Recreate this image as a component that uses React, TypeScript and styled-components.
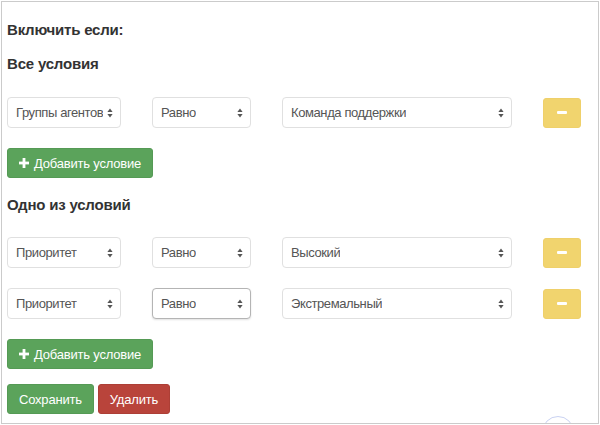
import React from 'react';
import styled, { createGlobalStyle } from 'styled-components';

const Global = createGlobalStyle`
  html, body { margin: 0; padding: 0; background: #fff; }
  body { font-family: "Liberation Sans", Arial, "Helvetica Neue", sans-serif; }
`;

const Frame = styled.div`
  position: relative;
  box-sizing: border-box;
  margin: 1px 0 0 1px;
  width: 598px;
  height: 423px;
  border: 1px solid #cbcbcb;
  padding: 18px 0 0 5px;
  overflow: hidden;
  background: #fff;
`;

const Heading = styled.h3<{ $mt: number }>`
  margin: ${(p) => p.$mt}px 0 0 0;
  font-size: 15px;
  line-height: 20px;
  font-weight: bold;
  letter-spacing: -0.2px;
  color: #333;
`;

const Row = styled.div<{ $mt: number }>`
  margin-top: ${(p) => p.$mt}px;
  display: grid;
  grid-template-columns: 114px 99px 230px 38px;
  column-gap: 31px;
  align-items: center;
`;

const SelectBox = styled.div<{ $focused?: boolean }>`
  box-sizing: border-box;
  height: 31px;
  display: flex;
  align-items: center;
  justify-content: space-between;
  gap: 2px;
  padding: 0 7px 0 8px;
  background: #fff;
  border: 1px solid ${(p) => (p.$focused ? '#b4b4b4' : '#e0e0e0')};
  border-radius: 4px;
  box-shadow: ${(p) => (p.$focused ? '0 1px 2px rgba(0,0,0,0.12)' : 'none')};
  font-size: 13px;
  letter-spacing: -0.4px;
  color: #555;
  white-space: nowrap;
  overflow: hidden;
  & > span { overflow: hidden; }
  & > svg { flex: none; }
`;

const MinusButton = styled.button`
  box-sizing: border-box;
  height: 30px;
  width: 38px;
  display: flex;
  align-items: center;
  justify-content: center;
  padding: 0;
  background: #f1d46e;
  border: 1px solid #efd06a;
  border-radius: 3px;
  &::after {
    content: '';
    display: block;
    width: 10px;
    height: 3px;
    border-radius: 1px;
    background: #fff;
  }
`;

const Button = styled.button<{ $variant: 'green' | 'red' }>`
  box-sizing: border-box;
  height: 30px;
  padding: 0 11px;
  display: inline-flex;
  align-items: center;
  gap: 5px;
  font-family: inherit;
  font-size: 13px;
  letter-spacing: -0.2px;
  color: #fff;
  border-radius: 3px;
  border: 1px solid ${(p) => (p.$variant === 'green' ? '#559a55' : '#ad3f36')};
  background: ${(p) => (p.$variant === 'green' ? '#5ba35b' : '#b9443b')};
  cursor: pointer;
`;

const AddRow = styled.div<{ $mt: number }>`
  margin-top: ${(p) => p.$mt}px;
  display: flex;
`;

const Actions = styled.div`
  margin-top: 15px;
  display: flex;
  gap: 4px;
`;

const Arc = styled.div`
  position: absolute;
  left: 540px;
  top: 414px;
  width: 30px;
  height: 30px;
  border-radius: 50%;
  border: 1px solid #c9d2f2;
`;

const Arrows = () => (
  <svg width="6" height="10" viewBox="0 0 6 10" aria-hidden>
    <path d="M3 0.5 L5.6 4 H0.4 Z" fill="#555" />
    <path d="M3 9.5 L5.6 6 H0.4 Z" fill="#555" />
  </svg>
);

const Plus = () => (
  <svg width="10" height="10" viewBox="0 0 10 10" aria-hidden>
    <rect x="3.6" y="0" width="2.8" height="10" fill="#fff" />
    <rect x="0" y="3.6" width="10" height="2.8" fill="#fff" />
  </svg>
);

const Select = ({ label, focused }: { label: string; focused?: boolean }) => (
  <SelectBox $focused={focused}>
    <span>{label}</span>
    <Arrows />
  </SelectBox>
);

type Cond = { field: string; op: string; value: string; focusedOp?: boolean };

const CondRow = ({ c, mt }: { c: Cond; mt: number }) => (
  <Row $mt={mt}>
    <Select label={c.field} />
    <Select label={c.op} focused={c.focusedOp} />
    <Select label={c.value} />
    <MinusButton aria-label="Удалить условие" />
  </Row>
);

export default function App() {
  return (
    <>
      <Global />
      <Frame>
        <Heading $mt={0}>Включить если:</Heading>
        <Heading $mt={14}>Все условия</Heading>
        <CondRow mt={23} c={{ field: 'Группы агентов', op: 'Равно', value: 'Команда поддержки' }} />
        <AddRow $mt={20}>
          <Button $variant="green">
            <Plus />
            Добавить условие
          </Button>
        </AddRow>
        <Heading $mt={17}>Одно из условий</Heading>
        <CondRow mt={22} c={{ field: 'Приоритет', op: 'Равно', value: 'Высокий' }} />
        <CondRow mt={20} c={{ field: 'Приоритет', op: 'Равно', value: 'Экстремальный', focusedOp: true }} />
        <AddRow $mt={20}>
          <Button $variant="green">
            <Plus />
            Добавить условие
          </Button>
        </AddRow>
        <Actions>
          <Button $variant="green">Сохранить</Button>
          <Button $variant="red">Удалить</Button>
        </Actions>
        <Arc />
      </Frame>
    </>
  );
}
